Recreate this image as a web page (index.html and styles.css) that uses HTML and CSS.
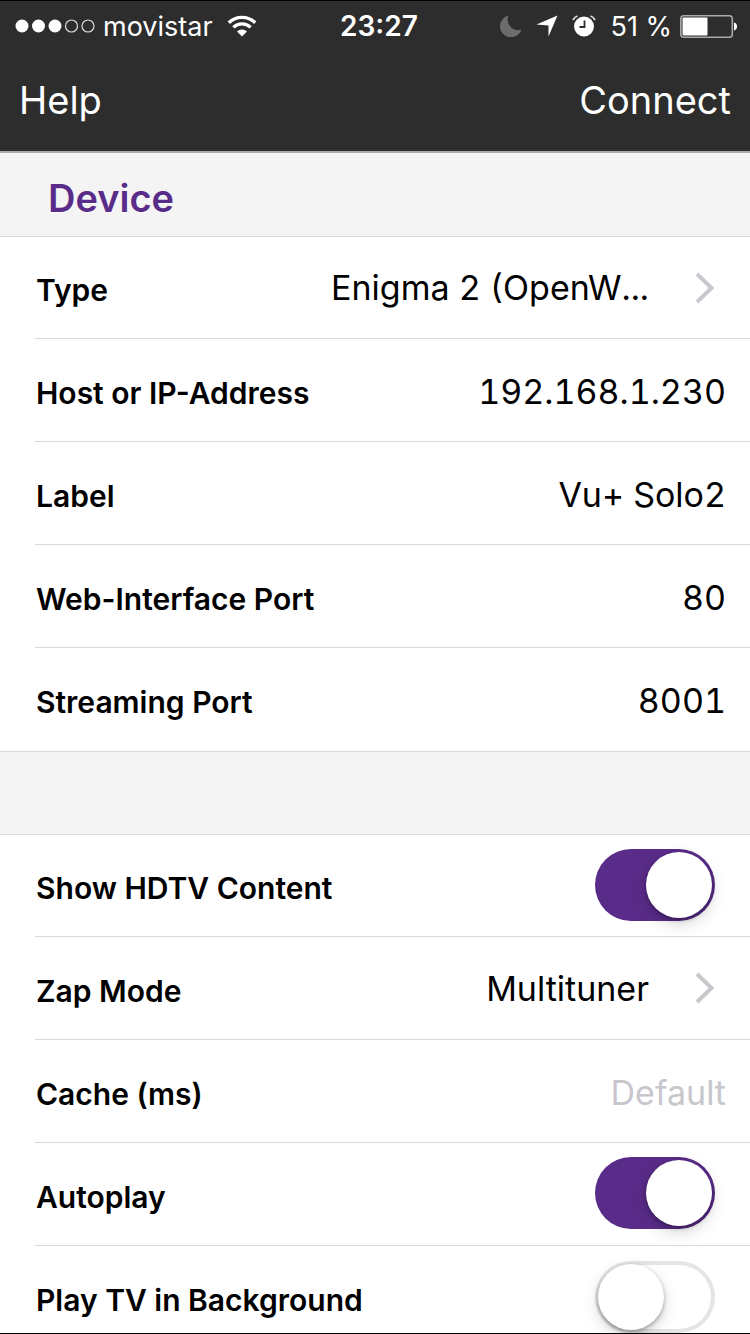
FILE: index.html
```html
<!DOCTYPE html>
<html lang="en">
<head>
  <meta charset="utf-8">
  <meta name="viewport" content="width=device-width, initial-scale=1">
  <title>Device</title>
  <link rel="stylesheet" href="styles.css">
</head>
<body>
<div class="app">
  <header class="top">
    <div class="status">
      <div class="status-side">
        <svg class="signal" width="80" height="14" viewBox="0 0 80 14" aria-hidden="true">
          <g fill="#fff"><circle cx="7" cy="7" r="6.5"/><circle cx="23.5" cy="7" r="6.5"/><circle cx="40" cy="7" r="6.5"/></g>
          <g fill="none" stroke="#ddd" stroke-width="1.2"><circle cx="56.5" cy="7" r="6"/><circle cx="73" cy="7" r="6"/></g>
        </svg>
        <span class="carrier">movistar</span>
        <svg width="30" height="22" viewBox="0 0 30 22" aria-hidden="true">
          <g fill="none" stroke="#fff" stroke-width="3.4">
            <path d="M1.8 7.8a18.8 18.8 0 0 1 26.4 0"/>
            <path d="M6.4 12.4a12.3 12.3 0 0 1 17.2 0"/>
          </g>
          <path d="M15 21.6l-5-5a7 7 0 0 1 10 0z" fill="#fff"/>
        </svg>
      </div>
      <time class="clock">23:27</time>
      <div class="status-side status-end">
        <svg width="22" height="22" viewBox="0 0 22 22" aria-hidden="true"><path d="M8.5.5A11 11 0 1 0 21.5 14.5 10.5 10.5 0 0 1 8.5.5z" fill="#6c6c6c"/></svg>
        <svg class="arrow" width="22" height="22" viewBox="0 0 22 22" aria-hidden="true"><path d="M21.5.5L12.500 21.500V10.500L.5 9.500z" fill="#fff"/></svg>
        <svg width="24" height="22" viewBox="0 0 24 22" aria-hidden="true">
          <circle cx="12" cy="11.500" r="10" fill="#fff"/>
          <path d="M12.500 5.500v6.500H7.500" fill="none" stroke="#2d2d2d" stroke-width="1.800"/>
          <path d="M1 5a8 8 0 0 1 4.500-4M23 5a8 8 0 0 0-4.500-4" fill="none" stroke="#ddd" stroke-width="1.800"/>
        </svg>
        <span class="percent">51 %</span>
        <svg class="battery" width="58" height="23" viewBox="0 0 58 23" aria-hidden="true">
          <rect x=".8" y=".8" width="51.500" height="21.400" rx="3" fill="none" stroke="#aaa" stroke-width="1.600"/>
          <rect x="2.500" y="2.500" width="25" height="18" rx="1" fill="#fff"/>
          <path d="M54 7.500c4 .5 4 7.500 0 8z" fill="#fff"/>
        </svg>
      </div>
    </div>
    <nav class="nav">
      <button class="nav-button" type="button">Help</button>
      <button class="nav-button" type="button">Connect</button>
    </nav>
  </header>
  <main class="content">
    <h1 class="heading">Device</h1>
    <div class="list">
      <div class="row">
        <span class="label" id="type-label">Type</span>
        <button class="picker" type="button" aria-labelledby="type-label type-value">
          <span id="type-value">Enigma 2 (OpenW...</span>
          <svg class="chevron" width="20" height="32" viewBox="0 0 20 32" aria-hidden="true"><path d="M2 2l14.500 14L2 30" fill="none" stroke="#c7c7cc" stroke-width="4"/></svg>
        </button>
      </div>
      <div class="row">
        <label class="label" for="host">Host or IP-Address</label>
        <input class="field" id="host" type="text" value="192.168.1.230">
      </div>
      <div class="row">
        <label class="label" for="name">Label</label>
        <input class="field" id="name" type="text" value="Vu+ Solo2">
      </div>
      <div class="row">
        <label class="label" for="web-port">Web-Interface Port</label>
        <input class="field" id="web-port" type="text" value="80">
      </div>
      <div class="row">
        <label class="label" for="stream-port">Streaming Port</label>
        <input class="field" id="stream-port" type="text" value="8001">
      </div>
    </div>
    <div class="list">
      <div class="row">
        <label class="label" for="hdtv">Show HDTV Content</label>
        <input class="switch" id="hdtv" type="checkbox" role="switch" checked>
      </div>
      <div class="row">
        <span class="label" id="zap-label">Zap Mode</span>
        <button class="picker" type="button" aria-labelledby="zap-label zap-value">
          <span id="zap-value">Multituner</span>
          <svg class="chevron" width="20" height="32" viewBox="0 0 20 32" aria-hidden="true"><path d="M2 2l14.500 14L2 30" fill="none" stroke="#c7c7cc" stroke-width="4"/></svg>
        </button>
      </div>
      <div class="row">
        <label class="label" for="cache">Cache (ms)</label>
        <input class="field" id="cache" type="text" placeholder="Default">
      </div>
      <div class="row">
        <label class="label" for="autoplay">Autoplay</label>
        <input class="switch" id="autoplay" type="checkbox" role="switch" checked>
      </div>
      <div class="row">
        <label class="label" for="background">Play TV in Background</label>
        <input class="switch" id="background" type="checkbox" role="switch">
      </div>
    </div>
  </main>
</div>
</body>
</html>
```
FILE: styles.css
```css
* { box-sizing: border-box; }

body {
  margin: 0;
  font-family: Inter, "Liberation Sans", sans-serif;
  background: #f4f4f4;
  color: #000;
}

.app {
  display: flex;
  flex-direction: column;
  height: 100vh;
  border-top: 1px solid #000;
  border-bottom: 1px solid #000;
}

.top {
  flex: none;
  background: #2d2d2d;
  border-bottom: 2px solid #aaa;
  color: #fff;
}

.status {
  display: grid;
  grid-template-columns: 1fr auto 1fr;
  align-items: center;
  height: 50px;
  padding: 0 12px 0 15px;
}

.status-side {
  display: flex;
  align-items: center;
}

.status-end { justify-content: flex-end; }

.carrier {
  margin: 0 14px 0 8px;
  font-size: 27px;
  font-weight: 400;
}

.clock {
  padding-left: 5px;
  font-size: 28px;
  font-weight: 600;
}

.arrow { margin: 0 14px; }

.percent {
  margin: 0 8px 0 14px;
  font-size: 27px;
  font-weight: 400;
}

.nav {
  display: flex;
  align-items: center;
  justify-content: space-between;
  height: 100px;
  padding: 0 19px 2px;
}

.nav-button {
  padding: 0;
  border: 0;
  background: none;
  color: inherit;
  font: 400 38px Inter, "Liberation Sans", sans-serif;
}

.content {
  flex: 1;
  min-height: 0;
  overflow-y: auto;
  scrollbar-width: none;
}

.heading {
  margin: 0;
  padding: 7px 48px 0;
  font-size: 38px;
  font-weight: 600;
  line-height: 76px;
  color: #5a2c8a;
  text-shadow: 0 1px 0 #fff;
}

.list {
  padding-left: 35px;
  background: #fff;
  border-top: 1px solid #d9d9d9;
  border-bottom: 1px solid #d9d9d9;
}

.list + .list { margin-top: 82px; }

.row {
  display: flex;
  align-items: center;
  justify-content: space-between;
  min-height: 103px;
  border-bottom: 1px solid #d9d9d9;
}

.row:first-child { min-height: 102px; }

.row:last-child { border-bottom: 0; }

.label {
  flex: none;
  padding: 5px 0 0 1px;
  font-size: 30px;
  font-weight: 600;
}

.field,
.picker {
  flex: 1;
  min-width: 0;
  border: 0;
  background: none;
  color: #000;
  font: 400 34px Inter, "Liberation Sans", sans-serif;
  font-variant-numeric: tabular-nums;
  text-align: right;
}

.field {
  padding: 2px 24px 0 0;
  outline: 0;
}

.field::placeholder { color: #c7c7cc; }

.picker {
  display: flex;
  align-items: center;
  justify-content: flex-end;
  gap: 46px;
  padding: 0 35px 0 0;
}

.switch {
  appearance: none;
  flex: none;
  display: flex;
  align-items: center;
  width: 120px;
  height: 72px;
  margin: 0 35px 2px 0;
  padding: 0 3px;
  border-radius: 36px;
  background: #fff;
  box-shadow: inset 0 0 0 4px #e5e5e5;
}

.switch::before {
  content: "";
  width: 66px;
  height: 66px;
  border-radius: 50%;
  background: #fff;
  box-shadow: 0 6px 16px rgba(0, 0, 0, 0.16), 0 2px 4px rgba(0, 0, 0, 0.3);
}

.switch:checked {
  justify-content: flex-end;
  background: #5a2c8a;
  box-shadow: none;
}
```
